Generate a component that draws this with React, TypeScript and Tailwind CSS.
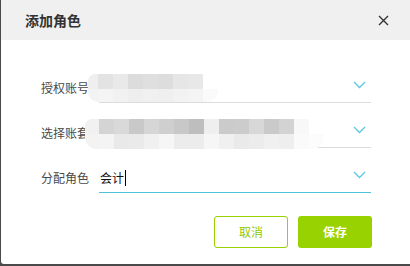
import React from "react"

const font = { fontFamily: '"Noto Sans CJK SC", "Noto Sans", sans-serif' }

// blurred account values (mosaic), colours read off the screenshot
const mosaicA = {
  top: ["#efefef", "#e3e3e3", "#e9e9e9", "#dcdcdc", "#dfdfdf", "#dddddd", "#e6e6e6", "#e8e8e8"],
  bottom: ["#f3f3f3", "#f4f4f4", "#f1f1f1", "#eeeeee", "#f0f0f0", "#efefef", "#f2f2f2", "#f4f4f4", "#fafafa"],
}
const mosaicB = {
  top: ["#f1f1f1", "#d4d4d4", "#d9d9d9", "#c9c9c9", "#d6d6d6", "#cfcfcf", "#c8c8c8", "#bebebe", "#efefef", "#cbcbcb", "#cccccc", "#d8d8d8", "#cacaca", "#d3d3d3", "#f8f8f8"],
  bottom: ["#f3f3f3", "#f4f4f4", "#e9e9e9", "#eaeaea", "#f0f0f0", "#f6f6f6", "#ececec", "#ececec", "#f6f6f6", "#f0f0f0", "#eaeaea", "#ececec", "#f0f0f0", "#eeeeee", "#fafafa", "#fcfcfc"],
}

function Mosaic({
  data,
  first,
  bottomH,
  left,
}: {
  data: { top: string[]; bottom: string[] }
  first: number
  bottomH: number
  left: number
}) {
  return (
    <div className="absolute top-[1px] flex flex-col" style={{ left }}>
      <div className="flex h-[15px]">
        {data.top.map((c, i) => (
          <div key={i} className={i === 0 ? "rounded-tl-[7px]" : ""} style={{ background: c, width: i === 0 ? first : 15 }} />
        ))}
      </div>
      <div className="flex" style={{ height: bottomH }}>
        {data.bottom.map((c, i) => (
          <div
            key={i}
            className={i === 0 ? "rounded-bl-[12px]" : i === data.bottom.length - 1 ? "rounded-br-[12px]" : ""}
            style={{ background: c, width: i === 0 ? first : 15 }}
          />
        ))}
      </div>
    </div>
  )
}

function Chevron() {
  return (
    <svg width="13" height="8" viewBox="0 0 13 8" className="mt-[8px] mr-[5px] shrink-0">
      <path d="M1 1 L6.5 6.5 L12 1" fill="none" stroke="#5cc8e0" strokeWidth="1.3" />
    </svg>
  )
}

function Row({ label, focused, children }: { label: string; focused?: boolean; children?: React.ReactNode }) {
  return (
    <div className="flex items-center">
      <div className="w-[58px] text-[12px] text-[#4a4a4a] leading-none">{label}</div>
      <div
        className={`relative flex h-[30px] w-[272px] items-start justify-between border-b ${
          focused ? "border-[#4fc1d9]" : "border-[#dcdcdc]"
        }`}
      >
        <div className="flex h-[29px] items-center pl-px">{children}</div>
        <Chevron />
      </div>
    </div>
  )
}

export default function App() {
  return (
    <div className="h-[266px] w-[410px] bg-[#4a4a4a] pl-px pb-[2px]" style={font}>
      <div className="h-[264px] w-[409px] overflow-hidden rounded-bl-[3px] bg-white">
        <div className="flex h-[40px] items-center justify-between bg-[#f0f0f0] pl-[24px] pr-[21px]">
          <span className="text-[14px] font-bold text-[#333]">添加角色</span>
          <svg width="11" height="11" viewBox="0 0 11 11">
            <path d="M1 1 L10 10 M10 1 L1 10" stroke="#333" strokeWidth="1.4" />
          </svg>
        </div>

        <div className="flex flex-col gap-[15px] pl-[40px] pt-[33px]">
          <Row label="授权账号">
            <Mosaic data={mosaicA} first={10} bottomH={13} left={-11} />
          </Row>
          <Row label="选择账套">
            <Mosaic data={mosaicB} first={14} bottomH={15} left={-14} />
          </Row>
          <Row label="分配角色" focused>
            <span className="text-[12px] text-[#111] leading-none">会计</span>
            <span className="ml-px h-[16px] w-px bg-black" />
          </Row>
        </div>

        <div className="mt-[23px] flex justify-end gap-[10px] pr-[38px]">
          <button className="h-[32px] w-[74px] rounded-[3px] border border-[#9ad100] bg-white text-[12px] text-[#8fc900]">
            取消
          </button>
          <button className="h-[32px] w-[74px] rounded-[3px] bg-[#98d200] text-[12px] font-bold text-white">
            保存
          </button>
        </div>
      </div>
    </div>
  )
}
